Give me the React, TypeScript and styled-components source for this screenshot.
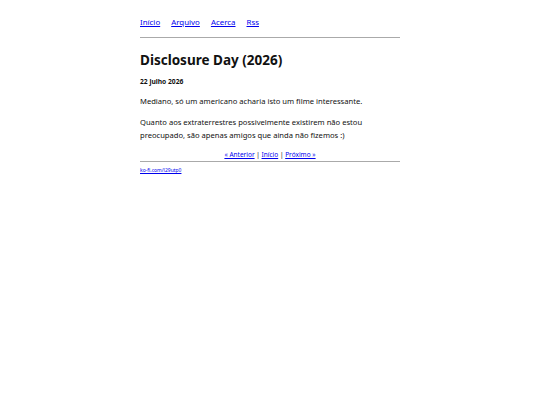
import React from "react";
import styled, { createGlobalStyle } from "styled-components";

const Global = createGlobalStyle`
  html, body { margin: 0; padding: 0; background: #fff; }
  body { font-family: "Noto Sans", "Open Sans", sans-serif; color: #111; }
`;

const Page = styled.div`
  width: 260px;
  margin: 0 auto;
  padding-top: 16px;
`;

const Nav = styled.nav`
  display: flex;
  gap: 11px;
  font-size: 7.9px;
  line-height: 12px;
  padding-bottom: 9px;
  border-bottom: 1px solid #aaa;
`;

const Link = styled.a`
  color: #0000ee;
  text-decoration: underline;
`;

const Title = styled.h1`
  font-size: 13.5px;
  font-weight: 700;
  margin: 12px 0 0;
  line-height: 20px;
`;

const DateLine = styled.div`
  font-size: 6.7px;
  font-weight: 700;
  margin-top: 7px;
  line-height: 10px;
`;

const Para = styled.p`
  font-size: 7.6px;
  line-height: 13px;
  margin: 8px 0 0;
`;

const Pager = styled.div`
  text-align: center;
  font-size: 6.5px;
  line-height: 9px;
  margin-top: 8px;
  padding-bottom: 2px;
  border-bottom: 1px solid #aaa;
`;

const Footer = styled.div`
  font-size: 5px;
  line-height: 8px;
  margin-top: 4px;
`;

export default function App() {
  return (
    <>
      <Global />
      <Page>
        <Nav>
          <Link href="#">Início</Link>
          <Link href="#">Arquivo</Link>
          <Link href="#">Acerca</Link>
          <Link href="#">Rss</Link>
        </Nav>
        <Title>Disclosure Day (2026)</Title>
        <DateLine>22 julho 2026</DateLine>
        <Para>Mediano, só um americano acharia isto um filme interessante.</Para>
        <Para>
          Quanto aos extraterrestres possivelmente existirem não estou
          preocupado, são apenas amigos que ainda não fizemos :)
        </Para>
        <Pager>
          <Link href="#">« Anterior</Link> | <Link href="#">Início</Link> |{" "}
          <Link href="#">Próximo »</Link>
        </Pager>
        <Footer>
          <Link href="#">ko-fi.com/l29utp0</Link>
        </Footer>
      </Page>
    </>
  );
}
